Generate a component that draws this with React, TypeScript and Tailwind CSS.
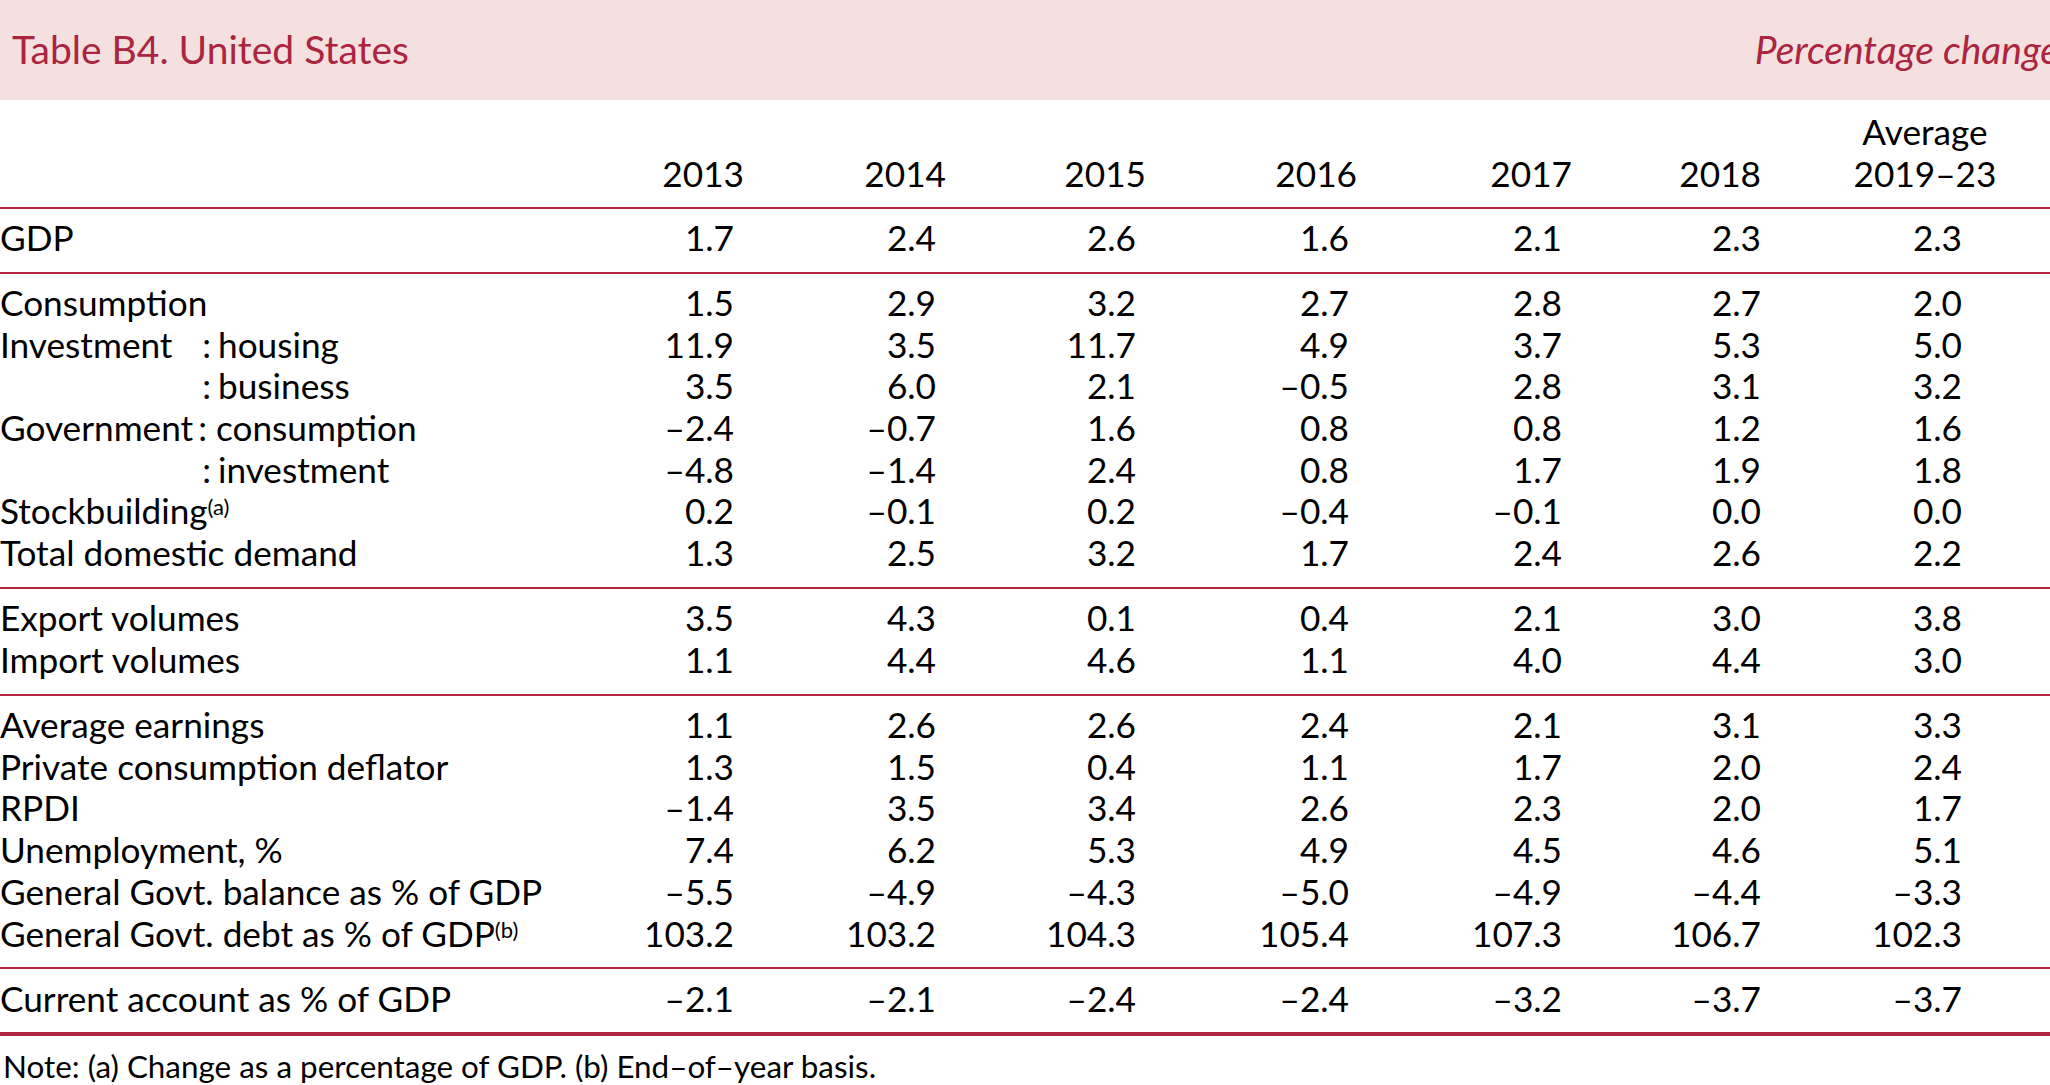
import React from 'react';

type Row = { label: React.ReactNode; values: string[] };

const cols = 'grid grid-cols-[540px_204px_202px_200px_211px_215px_189px_1fr]';
// right padding so numbers line up under the printed columns
const numPad = ['pr-[10px]', 'pr-[10px]', 'pr-[10px]', 'pr-[8px]', 'pr-[10px]', 'pr-0', 'pr-[88px]'];

// "Investment   : housing" style labels, sub-item sits on a tab stop
const Sub = ({ head, sub }: { head: string; sub: string }) => (
  <span className="flex">
    <span className="flex w-[218px] shrink-0">
      <span>{head}</span>
      <span className="ml-auto pr-[7px]">:</span>
    </span>
    <span>{sub}</span>
  </span>
);

const Note = ({ children }: { children: React.ReactNode }) => (
  <sup className="relative top-[-9px] text-[22px]">{children}</sup>
);

const sections: Row[][] = [
  [{ label: 'GDP', values: ['1.7', '2.4', '2.6', '1.6', '2.1', '2.3', '2.3'] }],
  [
    { label: 'Consumption', values: ['1.5', '2.9', '3.2', '2.7', '2.8', '2.7', '2.0'] },
    { label: <Sub head="Investment" sub="housing" />, values: ['11.9', '3.5', '11.7', '4.9', '3.7', '5.3', '5.0'] },
    { label: <Sub head="" sub="business" />, values: ['3.5', '6.0', '2.1', '–0.5', '2.8', '3.1', '3.2'] },
    {
      label: (
        <span>
          Government<span className="ml-[5px]">:</span> consumption
        </span>
      ),
      values: ['–2.4', '–0.7', '1.6', '0.8', '0.8', '1.2', '1.6'],
    },
    { label: <Sub head="" sub="investment" />, values: ['–4.8', '–1.4', '2.4', '0.8', '1.7', '1.9', '1.8'] },
    {
      label: (
        <span>
          Stockbuilding<Note>(a)</Note>
        </span>
      ),
      values: ['0.2', '–0.1', '0.2', '–0.4', '–0.1', '0.0', '0.0'],
    },
    { label: 'Total domestic demand', values: ['1.3', '2.5', '3.2', '1.7', '2.4', '2.6', '2.2'] },
  ],
  [
    { label: 'Export volumes', values: ['3.5', '4.3', '0.1', '0.4', '2.1', '3.0', '3.8'] },
    { label: 'Import volumes', values: ['1.1', '4.4', '4.6', '1.1', '4.0', '4.4', '3.0'] },
  ],
  [
    { label: 'Average earnings', values: ['1.1', '2.6', '2.6', '2.4', '2.1', '3.1', '3.3'] },
    { label: 'Private consumption deflator', values: ['1.3', '1.5', '0.4', '1.1', '1.7', '2.0', '2.4'] },
    { label: 'RPDI', values: ['–1.4', '3.5', '3.4', '2.6', '2.3', '2.0', '1.7'] },
    { label: 'Unemployment, %', values: ['7.4', '6.2', '5.3', '4.9', '4.5', '4.6', '5.1'] },
    { label: 'General Govt. balance as % of GDP', values: ['–5.5', '–4.9', '–4.3', '–5.0', '–4.9', '–4.4', '–3.3'] },
    {
      label: (
        <span>
          General Govt. debt as % of GDP<Note>(b)</Note>
        </span>
      ),
      values: ['103.2', '103.2', '104.3', '105.4', '107.3', '106.7', '102.3'],
    },
  ],
  [{ label: 'Current account as % of GDP', values: ['–2.1', '–2.1', '–2.4', '–2.4', '–3.2', '–3.7', '–3.7'] }],
];

const years = ['2013', '2014', '2015', '2016', '2017', '2018'];

export default function App() {
  return (
    <div className="w-[2050px] h-[1085px] overflow-hidden bg-white text-black font-['Lato',sans-serif]">
      {/* title band */}
      <div className="flex justify-between items-start bg-[#f3e0df] h-[100px] text-[#ab2540]">
        <h1 className="pt-[25px] pl-[12px] text-[39px] leading-[48px]">Table B4. United States</h1>
        <span className="pt-[25px] -mr-[9px] text-[39px] italic leading-[48px] whitespace-nowrap">
          Percentage change
        </span>
      </div>

      <div className="text-[35.2px]">
        {/* column heads */}
        <div className={`${cols} pt-[10.8px] pb-[12.5px] leading-[41.7px]`}>
          <div className="col-start-8 pl-[39px] text-center">Average</div>
          <div />
          {years.map((y) => (
            <div key={y} className="text-right">
              {y}
            </div>
          ))}
          <div className="pl-[39px] text-center">2019–23</div>
        </div>

        {sections.map((rows, i) => (
          <div key={i} className="pt-[8.2px] pb-[13.1px] border-t-2 border-[#b0263e]">
            {rows.map((r, j) => (
              <div key={j} className={`${cols} h-[41.72px] leading-[41.7px]`}>
                <div className="whitespace-nowrap">{r.label}</div>
                {r.values.map((v, k) => (
                  <div key={k} className={`text-right ${numPad[k]}`}>
                    {v}
                  </div>
                ))}
              </div>
            ))}
          </div>
        ))}
        <div className="border-t-4 border-[#b0263e]" />
      </div>

      <p className="mt-[12px] pl-[3px] text-[31.4px] leading-[37px] whitespace-nowrap">
        Note: (a) Change as a percentage of GDP. (b) End–of–year basis.
      </p>
    </div>
  );
}
